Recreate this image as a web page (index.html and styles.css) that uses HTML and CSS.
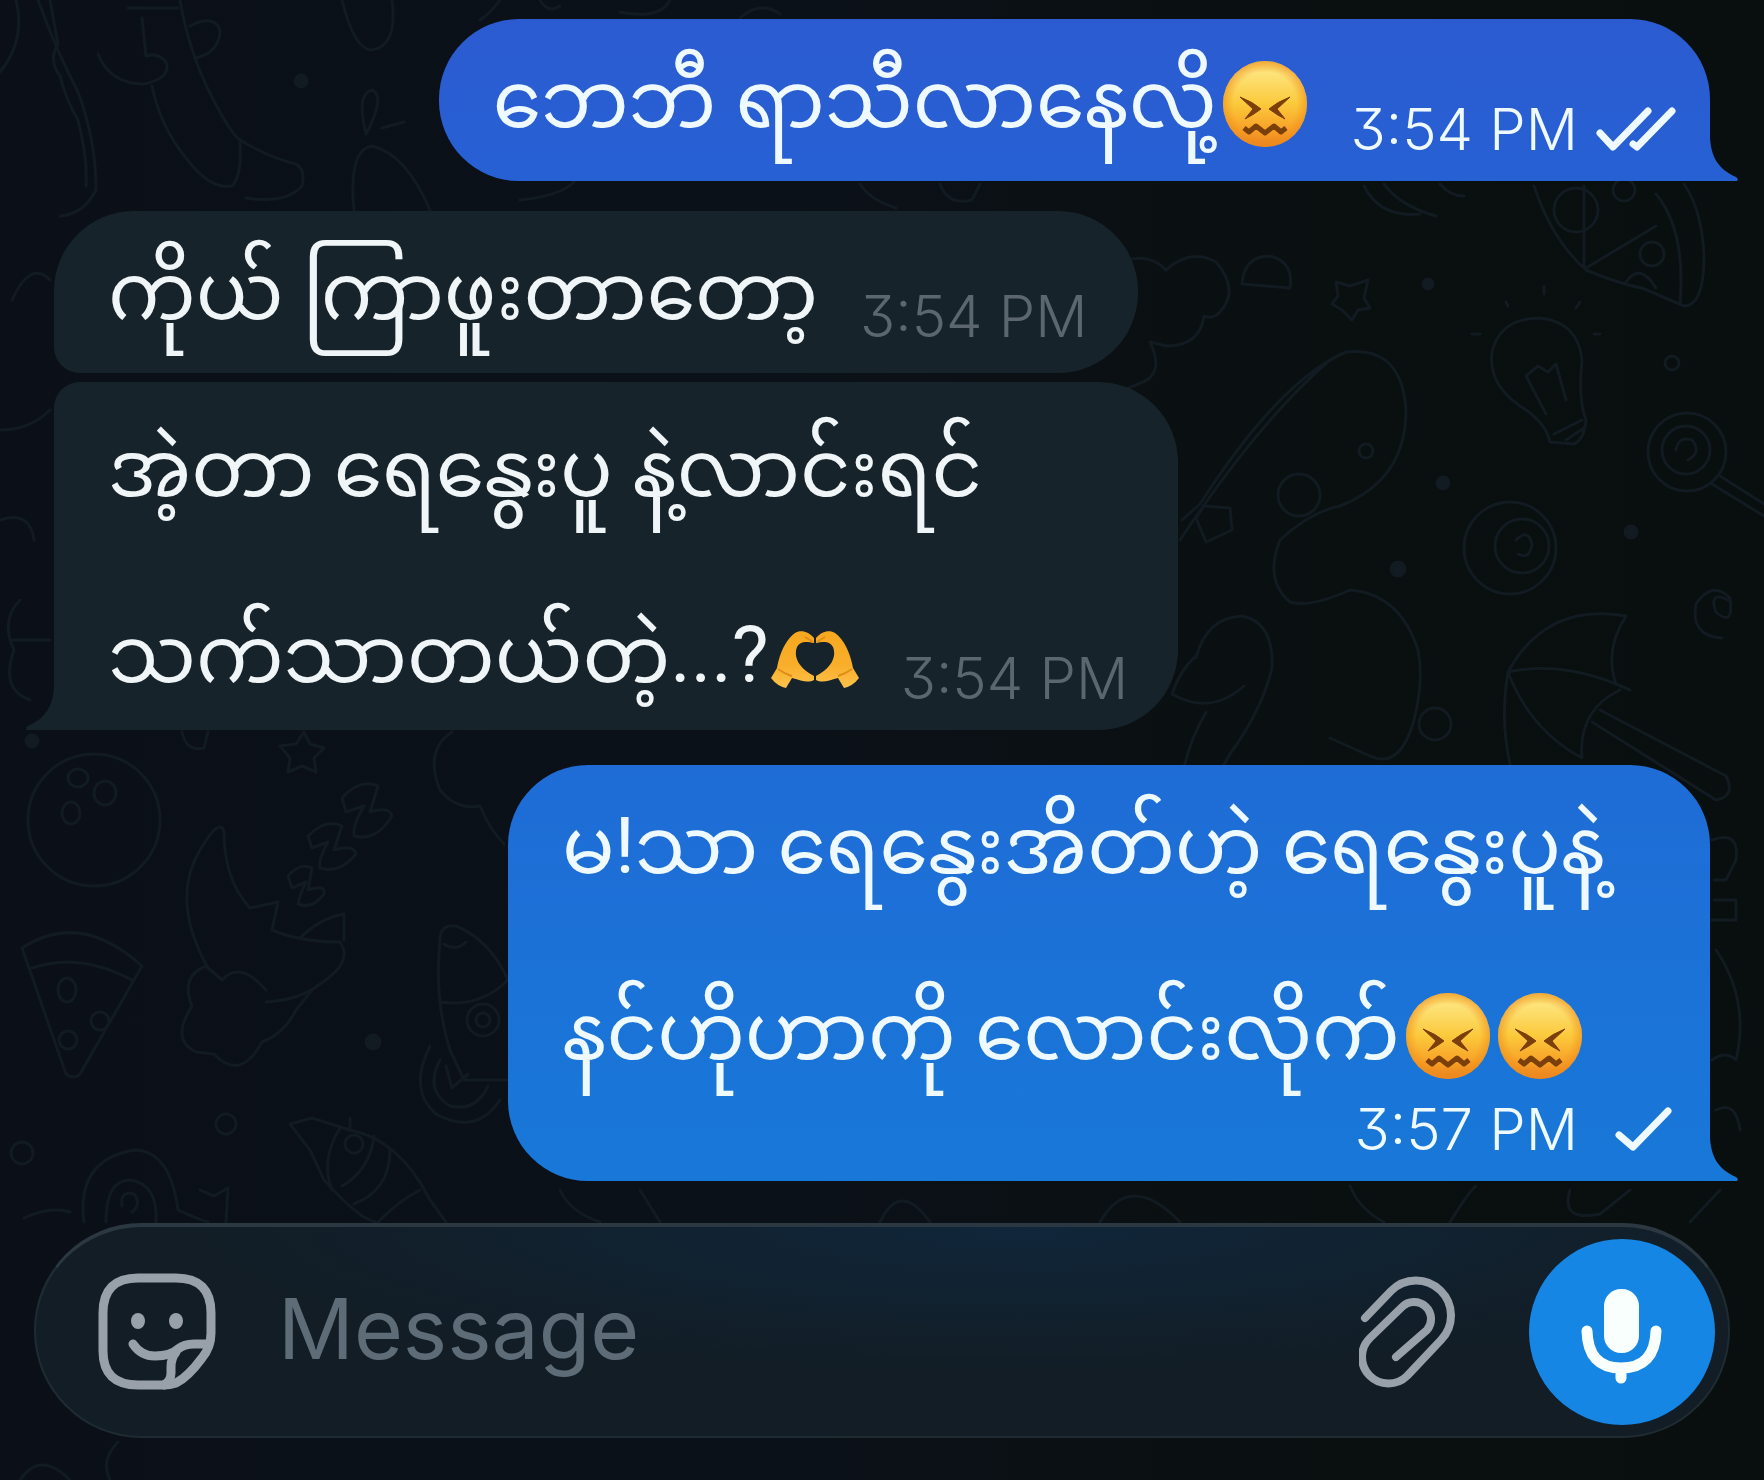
FILE: index.html
```html
<!DOCTYPE html>
<html lang="my">
<head>
  <meta charset="utf-8">
  <meta name="viewport" content="width=device-width, initial-scale=1">
  <title>Chat</title>
  <link rel="stylesheet" href="styles.css">
</head>
<body>
  <!-- Wallpaper doodles -->
  <svg class="wallpaper" viewBox="0 0 1764 1480" preserveAspectRatio="xMidYMid slice" aria-hidden="true">
    <!-- top left -->
    <path d="M0 72Q26 40 16 0M38 0Q56 50 78 92Q96 140 96 190Q84 214 60 216M50 0L58 44Q48 60 60 76Q66 100 78 120Q88 160 86 186"/>
    <path d="M98 54Q110 84 144 84Q172 78 166 62Q158 52 146 56L142 18M128 8H178M180 0Q190 60 220 112Q232 134 240 140Q270 158 296 164Q306 170 302 186Q286 204 246 198M152 86Q160 126 186 158Q210 190 232 186Q242 176 240 142M190 26Q214 14 220 30Q220 52 196 58"/>
    <path d="M342 0Q354 50 372 50Q398 46 392 0M366 134Q356 94 372 90Q386 96 366 134M382 128L404 122M354 210Q348 150 372 146Q406 154 430 210"/>
    <circle class="dot" cx="301" cy="81" r="6"/>
    <path d="M500 0Q490 14 480 20M540 0Q548 14 560 6M620 12Q660 20 670 0M740 18Q760 0 780 14M520 200Q560 196 574 182M860 184Q870 200 896 208M940 184Q948 206 972 200L980 184"/>
    <path d="M12 300Q30 260 50 280M0 520Q30 510 34 540M20 600Q0 620 14 650Q0 690 30 700M10 640H50M0 430Q30 430 50 410"/>
    <!-- cloud -->
    <path d="M1128 260Q1150 254 1166 270Q1190 248 1216 262Q1240 290 1220 312Q1212 320 1204 316Q1200 346 1166 346L1150 342Q1166 376 1138 384L1124 390M1242 284Q1244 256 1270 256Q1294 262 1290 288Z"/>
    <path d="M1364 186Q1380 218 1420 214M1384 184Q1400 206 1436 216M1440 184Q1450 196 1464 196"/>
    <!-- pizza slice -->
    <path d="M1534 186Q1552 240 1586 270Q1620 284 1642 288L1684 306Q1704 306 1704 256Q1702 210 1684 184M1656 194Q1686 230 1680 304M1584 266V186M1586 268L1656 226M1626 282Q1640 262 1656 288"/>
    <circle cx="1576" cy="210" r="22"/>
    <circle cx="1652" cy="254" r="12"/>
    <circle cx="1624" cy="190" r="11"/>
    <!-- star, bulb -->
    <path d="M1336 282L1350 286L1368 280L1364 298L1370 308L1358 310L1352 320L1342 310L1332 304L1338 296Z"/>
    <path d="M1550 442Q1546 422 1520 406Q1488 384 1492 352Q1500 318 1540 318Q1578 322 1582 360Q1578 400 1586 420Q1584 440 1574 444ZM1526 376L1538 366L1548 372L1556 364L1566 400M1526 376L1546 414M1554 434L1582 420M1566 440L1584 428M1472 334H1480M1506 302L1508 306M1544 286V294M1580 302L1576 308M1600 334H1594"/>
    <circle class="dot" cx="1428" cy="284" r="5"/>
    <circle cx="1672" cy="363" r="7"/>
    <!-- balloon -->
    <path d="M1182 520L1200 504Q1280 380 1346 352Q1402 346 1406 410Q1406 480 1340 506Q1310 512 1280 540Q1264 580 1290 602Q1310 608 1350 590Q1400 594 1418 650Q1424 680 1414 720Q1400 770 1370 756L1330 738M1180 540Q1260 420 1330 360"/>
    <circle cx="1299" cy="495" r="21"/>
    <circle cx="1366" cy="451" r="7"/>
    <circle class="dot" cx="1443" cy="483" r="6"/>
    <circle class="dot" cx="1398" cy="569" r="7"/>
    <circle cx="1435" cy="724" r="16"/>
    <path d="M1204 506L1230 508L1232 530L1206 542L1196 518Z"/>
    <!-- seahorse -->
    <path d="M1196 658Q1206 618 1242 616Q1274 622 1272 668Q1262 710 1230 754L1222 768M1196 656Q1180 670 1172 694Q1210 716 1244 686M1206 712Q1190 740 1184 768"/>
    <!-- candy -->
    <circle cx="1510" cy="548" r="46"/>
    <circle cx="1522" cy="546" r="27"/>
    <path d="M1516 540Q1528 528 1532 544Q1530 560 1518 554"/>
    <circle cx="1687" cy="452" r="39"/>
    <circle cx="1686" cy="450" r="24"/>
    <path d="M1676 450Q1678 436 1692 440Q1702 452 1688 460M1712 484L1764 516M1720 476L1764 504"/>
    <circle class="dot" cx="1631" cy="532" r="6"/>
    <path d="M1728 600Q1708 590 1716 612Q1734 628 1730 598Q1712 580 1696 604Q1690 636 1722 638"/>
    <!-- umbrella -->
    <path d="M1508 672Q1546 602 1626 616Q1604 650 1616 684L1630 690Q1566 660 1508 672Q1500 720 1510 764M1508 672Q1530 730 1582 758Q1578 710 1620 690M1600 710L1726 776Q1736 796 1716 800L1592 722"/>
    <!-- ball -->
    <circle cx="94" cy="820" r="66"/>
    <ellipse cx="78" cy="778" rx="10" ry="9"/>
    <ellipse cx="105" cy="793" rx="11" ry="12"/>
    <ellipse cx="71" cy="813" rx="9" ry="11"/>
    <circle class="dot" cx="32" cy="741" r="6"/>
    <path d="M182 732Q186 752 204 748L208 732M304 732L310 744L324 748L314 758L316 772L302 766L288 772L290 758L280 746L296 744Z"/>
    <!-- pizza -->
    <path d="M22 948Q80 910 142 966L80 1074Q74 1080 66 1074ZM32 968Q80 952 132 980"/>
    <ellipse cx="67" cy="990" rx="9" ry="12"/>
    <circle cx="100" cy="1021" r="9"/>
    <circle cx="68" cy="1040" r="9"/>
    <!-- moon -->
    <path d="M208 968Q170 900 200 850Q220 816 224 832Q224 880 250 908L278 902L272 930Q300 942 340 942Q354 962 320 984Q300 1000 266 1002M300 938Q320 918 344 914L344 940"/>
    <path d="M222 980Q240 960 266 990M222 980L206 966Q180 976 192 1006Q170 1040 196 1052L214 1054Q240 1082 262 1042Q284 1034 296 1010L312 990"/>
    <path d="M288 876Q300 862 312 868L308 890Q326 884 324 894Q312 910 298 904Q300 894 306 882L292 888ZM308 836Q326 818 342 826L334 850Q354 844 356 854Q340 874 320 868Q318 860 328 842L312 848ZM342 798Q360 778 378 786L370 812Q390 806 392 816Q376 842 354 836Q352 826 364 806L346 812Z"/>
    <circle class="dot" cx="373" cy="1042" r="7"/>
    <circle cx="226" cy="1124" r="10"/>
    <circle cx="22" cy="1153" r="11"/>
    <!-- speech bubble, rocket -->
    <path d="M452 732Q424 750 440 790Q456 810 480 806Q490 830 504 844M508 980Q490 940 456 926Q440 924 440 940Q434 1000 450 1050L464 1080H508M440 1002Q480 1008 508 980M444 944Q456 952 466 942"/>
    <circle cx="483" cy="1020" r="16"/>
    <circle cx="483" cy="1020" r="7"/>
    <path d="M430 1046Q408 1090 436 1114Q476 1136 500 1100M440 1060Q424 1090 450 1106Q476 1112 488 1086M446 1066L452 1088L468 1074"/>
    <!-- cupcake, snail -->
    <path d="M290 1124L312 1118L350 1130Q400 1140 430 1200L446 1222M290 1124L310 1150L324 1180Q360 1220 376 1222M340 1128Q320 1160 332 1190M374 1136Q370 1170 342 1186M390 1150Q390 1190 354 1204M350 1130V1118M378 1222Q400 1200 420 1190"/>
    <circle cx="354" cy="1144" r="9"/>
    <path d="M84 1222Q76 1160 134 1150Q170 1150 178 1210Q200 1220 208 1222M106 1222Q106 1180 130 1180Q158 1184 156 1222M122 1206Q120 1190 134 1194Q142 1204 132 1212M200 1190L214 1196L228 1188L226 1222M24 1218Q50 1206 70 1212"/>
    <!-- right edge and bottom -->
    <path d="M1712 840Q1740 830 1736 860L1726 880H1714M1714 900H1736V920H1712M1716 950Q1750 1000 1736 1060Q1726 1050 1712 1060M1716 1110Q1736 1100 1740 1130"/>
    <path d="M560 1190Q570 1212 600 1222M640 1190L660 1222M880 1222Q900 1180 930 1222M1100 1222Q1130 1170 1180 1222M1350 1186Q1360 1210 1384 1222M1450 1222Q1470 1190 1476 1186M1570 1190Q1560 1222 1600 1214L1630 1190M1690 1222L1720 1190M20 1480Q40 1450 70 1480M110 1480Q100 1460 118 1442"/>
  </svg>

  <!-- Shared artwork -->
  <svg class="sprite" aria-hidden="true">
    <defs>
      <linearGradient id="face-fill" x1="0" y1="0" x2="0" y2="1">
        <stop offset="0" stop-color="#f6d35e"/>
        <stop offset="0.14" stop-color="#fde37a"/>
        <stop offset="0.5" stop-color="#fbc93b"/>
        <stop offset="0.8" stop-color="#f8a127"/>
        <stop offset="1" stop-color="#e9801f"/>
      </linearGradient>
      <radialGradient id="face-edge">
        <stop offset="0.75" stop-color="#ef8c1c" stop-opacity="0"/>
        <stop offset="1" stop-color="#ef8c1c" stop-opacity="0.6"/>
      </radialGradient>
      <linearGradient id="hand-fill" x1="0" y1="0" x2="0" y2="1">
        <stop offset="0" stop-color="#f6a81f"/>
        <stop offset="0.6" stop-color="#f9ae2a"/>
        <stop offset="1" stop-color="#fcc24c"/>
      </linearGradient>
    </defs>
    <symbol id="confounded" viewBox="0 0 84 86">
      <ellipse cx="42" cy="43" rx="42" ry="43" fill="url(#face-fill)"/>
      <ellipse cx="42" cy="43" rx="42" ry="43" fill="url(#face-edge)"/>
      <path d="M17 36Q30 41 38 48Q30 54 22 58L30 48ZM67 36Q54 41 46 48Q54 54 62 58L54 48Z" fill="#7b3f0b" stroke="#7b3f0b" stroke-width="1" stroke-linejoin="round"/>
      <path d="M21 67L26 71L33 65L42 72L51 65L58 71L63 67" fill="none" stroke="#7b3f0b" stroke-width="5" stroke-linejoin="round"/>
    </symbol>
    <symbol id="heart-hands" viewBox="0 0 88 58">
      <path d="M0 48L6 38C8 26 14 10 24 3C30 -1 38 2 43 8L43 13C37 12 30 10 26 17C22 27 28 38 43 46V50C37 53 31 51 21 48L15 58Q6 56 0 48Z" fill="url(#hand-fill)"/>
      <path d="M88 48L82 38C80 26 74 10 64 3C58 -1 50 2 45 8L45 13C51 12 58 10 62 17C66 27 60 38 45 46V50C51 53 57 51 67 48L73 58Q82 56 88 48Z" fill="url(#hand-fill)"/>
      <path d="M7 39Q14 44 21 46M81 39Q74 44 67 46M34 7L42 12M54 7L46 12" fill="none" stroke="#e08d18" stroke-width="2"/>
    </symbol>
  </svg>

  <main class="chat">
    <section class="messages" aria-label="Messages">
      <article class="bubble bubble-out bubble-first">
        <div class="line">
          <p class="text">ဘေဘီ ရာသီလာနေလို့<svg class="emoji" role="img" aria-label="😖"><use href="#confounded"/></svg></p>
          <div class="meta">
            <time>3:54 PM</time>
            <svg class="check" viewBox="0 0 80 44" role="img" aria-label="Read"><path d="M4 26L17 40L52 4M37 37L41 40L76 4"/></svg>
          </div>
        </div>
      </article>

      <article class="bubble bubble-in bubble-group-top">
        <div class="line">
          <p class="text">ကိုယ် ကြာဖူးတာတော့</p>
          <div class="meta"><time>3:54 PM</time></div>
        </div>
      </article>

      <article class="bubble bubble-in bubble-group-end">
        <p class="text">အဲ့တာ ရေနွေးပူ နဲ့လာင်းရင်</p>
        <div class="line">
          <p class="text">သက်သာတယ်တဲ့...?<svg class="emoji emoji-hands" role="img" aria-label="🫶"><use href="#heart-hands"/></svg></p>
          <div class="meta"><time>3:54 PM</time></div>
        </div>
      </article>

      <article class="bubble bubble-out bubble-last">
        <p class="text">မ!သာ ရေနွေးအိတ်ဟဲ့ ရေနွေးပူနဲ့</p>
        <p class="text">နင်ဟိုဟာကို လောင်းလိုက်<svg class="emoji" role="img" aria-label="😖"><use href="#confounded"/></svg><svg class="emoji" role="img" aria-label="😖"><use href="#confounded"/></svg></p>
        <div class="meta meta-below">
          <time>3:57 PM</time>
          <svg class="check" viewBox="0 0 80 44" role="img" aria-label="Sent"><path d="M23 28L37 40L72 4"/></svg>
        </div>
      </article>
    </section>

    <form class="composer">
      <button class="icon-button" type="button" aria-label="Stickers">
        <svg class="sticker-icon" viewBox="0 0 118 118">
          <path d="M66 112H40Q5 112 5 78V40Q5 5 40 5H78Q113 5 113 40V60Q113 74 104 85Q90 104 78 110Q72 112 66 112"/>
          <path d="M35 71Q43 83 57 83Q73 83 80 76Q86 71 96 71H111M78 79Q73 85 73 94V100Q73 108 66 112"/>
          <ellipse class="eye" cx="40" cy="48" rx="7" ry="8"/>
          <ellipse class="eye" cx="78" cy="48" rx="7" ry="8"/>
        </svg>
      </button>
      <input class="message-input" type="text" placeholder="Message" aria-label="Message">
      <button class="icon-button" type="button" aria-label="Attach file">
        <svg class="clip-icon" viewBox="0 0 98 114">
          <path d="M6 43L32 16A35 35 0 0 1 82 65L48 101A26 26 0 0 1 11 63L43 32A17 17 0 0 1 68 55L37 82"/>
        </svg>
      </button>
      <button class="mic-button" type="button" aria-label="Record voice message">
        <svg class="mic-icon" viewBox="0 0 186 186">
          <rect x="75" y="50" width="35" height="64" rx="17"/>
          <path d="M58 92Q59 129 92 129Q126 129 127 92M92 130V139"/>
        </svg>
      </button>
    </form>
  </main>
</body>
</html>
```

FILE: styles.css
```css
* {
  box-sizing: border-box;
}

body {
  margin: 0;
  background: #0b1012;
  background-image: linear-gradient(90deg, #0b1018 0%, #0b1118 45%, #0a0f10 75%, #090e0e 100%);
  color: #f0f5f7;
  font-family: Inter, Roboto, "Noto Sans", sans-serif;
}

p {
  margin: 0;
}

.wallpaper {
  position: fixed;
  inset: 0;
  z-index: -1;
  width: 100%;
  height: 100%;
  fill: none;
  stroke: #111b21;
  stroke-width: 3;
  stroke-linejoin: round;
  stroke-linecap: round;
}

.wallpaper .dot {
  fill: #111b21;
}

.sprite {
  position: absolute;
  width: 0;
  height: 0;
}

.chat {
  display: flex;
  flex-direction: column;
  min-height: 100vh;
  padding: 19px 34px 42px;
}

.messages {
  display: flex;
  flex: 1;
  flex-direction: column;
  padding: 0 20px;
}

/* Bubbles */
.bubble {
  position: relative;
  display: flex;
  flex-direction: column;
  gap: 24px;
  max-width: 100%;
  padding: 0 50px 0 54px;
  border-radius: 80px;
}

.bubble-out {
  align-self: flex-end;
  padding-right: 34px;
  border-bottom-right-radius: 0;
  color: #eefaff;
}

.bubble-in {
  align-self: flex-start;
  background: #17232b;
}

.bubble-first {
  background: linear-gradient(#2c5bd1, #2661d4);
}

.bubble-group-top {
  margin-top: 30px;
  border-bottom-left-radius: 26px;
}

.bubble-group-end {
  margin-top: 9px;
  border-top-left-radius: 26px;
  border-bottom-left-radius: 0;
}

.bubble-last {
  width: 1202px;
  margin-top: 35px;
  background: linear-gradient(#1f6cd6, #1878d8);
}

/* Tails */
.bubble-out::after,
.bubble-group-end::after {
  content: "";
  position: absolute;
  bottom: 0;
  left: 100%;
  width: 28px;
  height: 44px;
  background: #2661d4;
  clip-path: path("M0 0C1 20 8 32 26 40Q29 42 27 44H0Z");
}

.bubble-last::after {
  background: #1878d8;
}

.bubble-group-end::after {
  right: 100%;
  left: auto;
  background: #17232b;
  transform: scaleX(-1);
}

.line {
  display: flex;
  align-items: flex-end;
  justify-content: space-between;
  gap: 42px;
}

.text {
  font-family: Roboto, "Noto Sans Myanmar", Padauk, sans-serif;
  font-size: 78px;
  line-height: 164px;
  height: 162px;
  white-space: nowrap;
}

.bubble-group-end .text {
  line-height: 176px;
}

.emoji {
  width: 84px;
  height: 86px;
  margin: 0 2px 0 6px;
  vertical-align: -20px;
}

.emoji-hands {
  width: 88px;
  height: 58px;
  margin: 0 0 0 2px;
  vertical-align: -6px;
}

.meta {
  display: flex;
  align-items: center;
  gap: 18px;
  margin-bottom: 22px;
  font-size: 58px;
  font-weight: 300;
  font-feature-settings: "cv09";
  line-height: 60px;
  white-space: nowrap;
}

.bubble-in .meta {
  color: #5b666f;
}

.bubble-group-top .meta {
  margin-bottom: 27px;
}

.meta-below {
  align-self: flex-end;
  margin-top: -38px;
}

.check {
  width: 80px;
  height: 44px;
  fill: none;
  stroke: currentColor;
  stroke-width: 7;
  stroke-linecap: round;
  stroke-linejoin: round;
}

/* Composer */
.composer {
  display: flex;
  align-items: center;
  height: 215px;
  margin-top: 42px;
  padding: 0 13px 0 62px;
  border: 2px solid #1f2b32;
  border-top: 4px solid #2c3841;
  border-radius: 108px;
  background: radial-gradient(ellipse 50% 70% at 58% 0, #10263a, rgba(16, 38, 58, 0)), #121d25;
}

.icon-button,
.mic-button {
  display: flex;
  flex: none;
  padding: 0;
  border: 0;
  background: none;
  cursor: pointer;
}

.sticker-icon,
.clip-icon {
  fill: none;
  stroke: #98a1aa;
  stroke-linecap: round;
  stroke-linejoin: round;
}

.sticker-icon {
  width: 118px;
  height: 118px;
  stroke-width: 9;
}

.sticker-icon .eye {
  fill: #98a1aa;
  stroke: none;
}

.clip-icon {
  width: 98px;
  height: 114px;
  stroke-width: 8;
}

.message-input {
  flex: 1;
  min-width: 0;
  margin: 0 20px 0 62px;
  padding: 0 0 6px;
  border: 0;
  outline: 0;
  background: none;
  color: #f0f5f7;
  font-family: Inter, Roboto, sans-serif;
  font-size: 84px;
  line-height: 108px;
}

.message-input::placeholder {
  color: #5d6c77;
  opacity: 1;
}

.mic-button {
  margin-left: 72px;
  border-radius: 50%;
  background: #1686e4;
}

.mic-icon {
  width: 186px;
  height: 186px;
  fill: #f8fffc;
}

.mic-icon path {
  fill: none;
  stroke: #f8fffc;
  stroke-width: 11;
  stroke-linecap: round;
}
```
